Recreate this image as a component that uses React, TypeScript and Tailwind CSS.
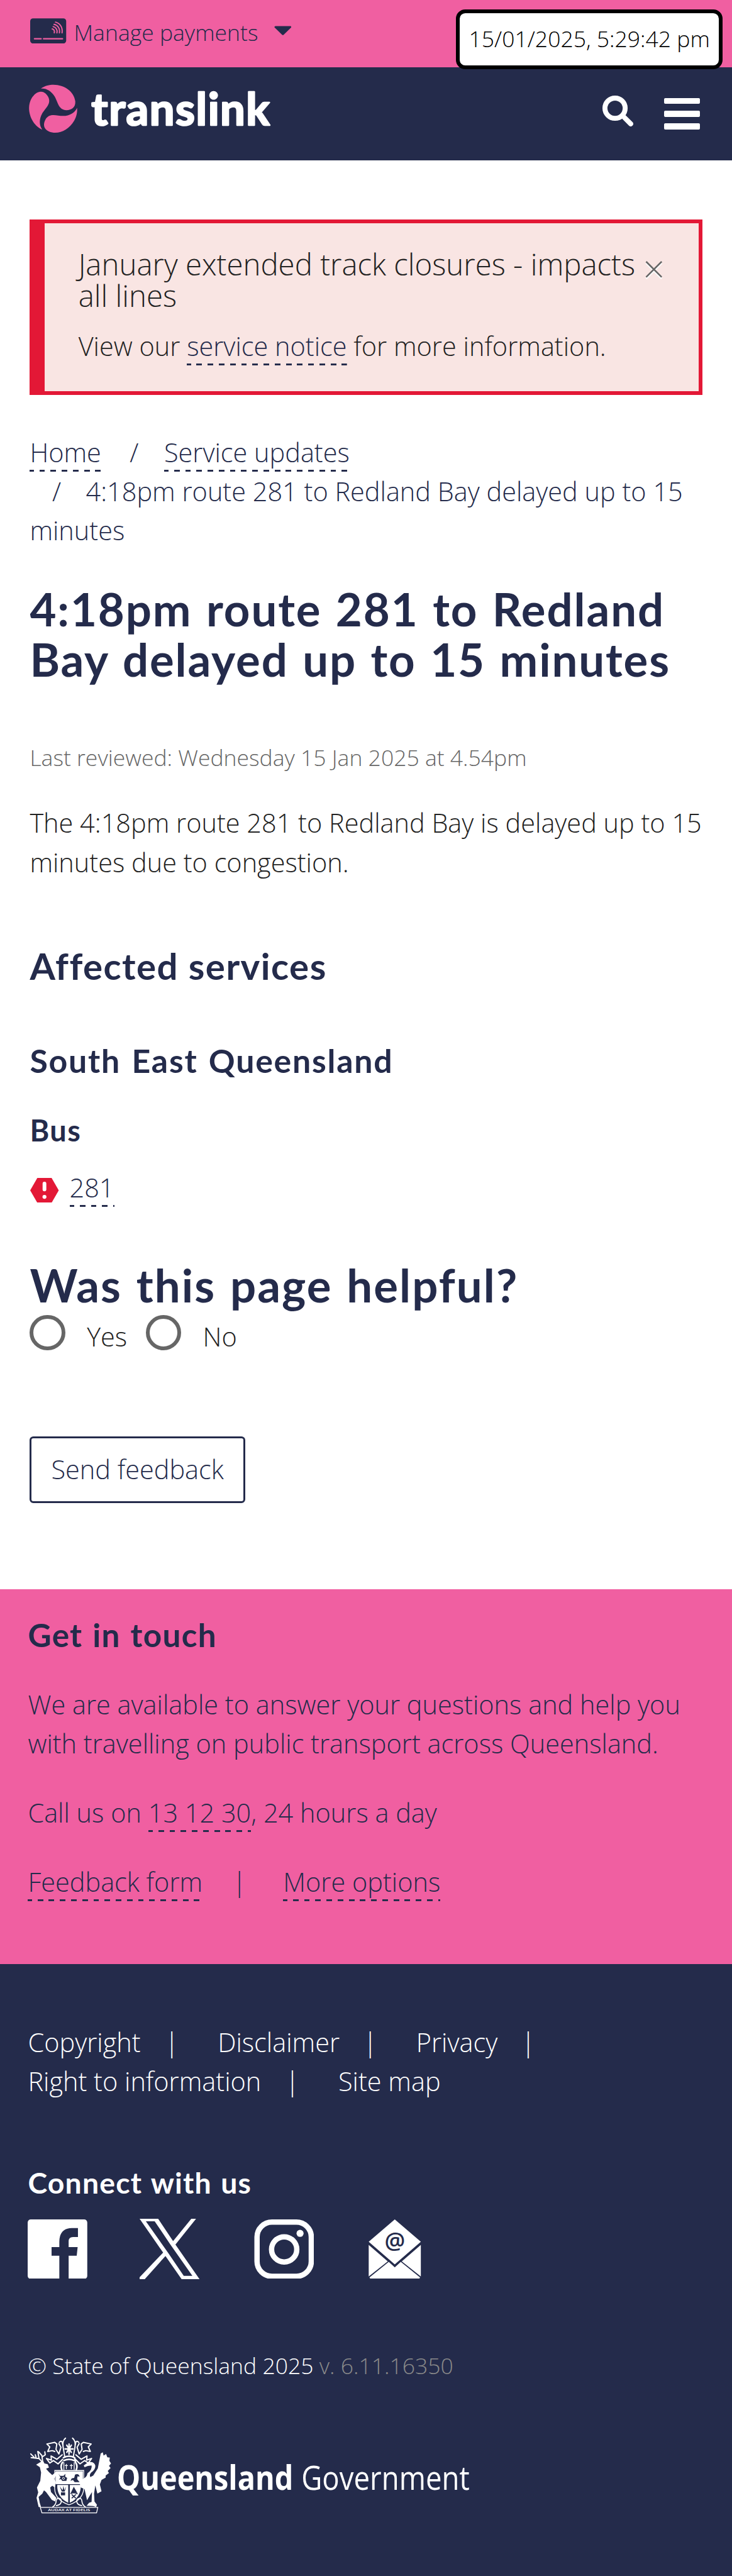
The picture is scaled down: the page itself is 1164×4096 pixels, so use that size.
import type { ReactNode } from "react";

function DashedLink({ children }: { children: ReactNode }) {
  return (
    <a
      href="#"
      className="bg-[repeating-linear-gradient(90deg,#242b4b_0_7px,transparent_7px_16px,#242b4b_16px_18px)] bg-[length:100%_3px] bg-bottom bg-no-repeat pb-[3px] text-[#242b4b]"
    >
      {children}
    </a>
  );
}

function CardIcon() {
  return (
    <svg viewBox="28 57 175 122" className="h-[41px] w-[58px] shrink-0">
      <rect x="28" y="57" width="175" height="122" rx="14" fill="#242b4b" />
      <g fill="none" stroke="#f05fa1" strokeWidth="6" strokeLinecap="round">
        <path d="M49 156H81M93 156H185" strokeWidth="7" />
        <path d="M151 75C172 80 187 100 183 127" />
        <path d="M144 86C161 89 174 106 170 127" />
        <path d="M140 97C152 99 162 112 158 127" />
        <path d="M135 108C143 110 148 117 145 127" />
      </g>
    </svg>
  );
}

function TranslinkLogo() {
  const blade =
    "M79 399C100 384 122 380 140 380C195 380 240 414 246 460C248 490 228 503 203 503C165 502 162 465 147 438C130 410 105 396 79 399Z";
  return (
    <svg viewBox="22 378 1170 240" className="h-[80px] w-[390px] overflow-visible">
      <g fill="#f05fa1">
        <path d={blade} />
        <path d={blade} transform="rotate(120 140 496)" />
        <path d={blade} transform="rotate(240 140 496)" />
      </g>
      <text
        x="324"
        y="576"
        textLength="862"
        lengthAdjust="spacing"
        fill="#fff"
        stroke="#fff"
        strokeWidth="8"
        strokeLinejoin="round"
        className="font-[Lato] text-[214px] font-bold"
      >
        translink
      </text>
    </svg>
  );
}

function CoatOfArms() {
  return (
    <svg viewBox="0 0 432 405" className="h-[135px] w-[144px] shrink-0 overflow-visible">
      <g fill="none" stroke="#fff" strokeWidth="6" strokeLinecap="round" strokeLinejoin="round">
        <path d="M192 24Q176 36 180 64L188 112M226 24Q242 36 238 64L230 112M162 44Q176 30 178 54M256 44Q242 30 240 54" />
        <path d="M209 52V102M190 76H228M198 58L220 92M220 58L198 92" strokeWidth="7" />
        <path d="M102 52L140 44L150 52L146 78L160 100L170 68L160 50M102 52L116 66L106 88L128 84L140 88M316 52L278 44L268 52L272 78L258 100L248 68L258 50M316 52L302 66L312 88L290 84L278 88" />
        <path d="M100 122L124 130L122 110L150 126L176 104M100 122L116 144L134 132L156 148L178 126M318 122L294 130L296 110L268 126L242 104M318 122L302 144L284 132L262 148L240 126" />
        <path d="M182 118Q209 104 236 118L240 140Q252 158 244 176M178 140Q166 158 174 176M184 132Q209 120 234 132" strokeWidth="8" />
        <path d="M184 142V176M234 142V176M196 158V172M220 158V172M190 156H202M214 156H226M196 150V158M220 150V158" strokeWidth="4" />
      </g>
      <g fill="none" stroke="#fff" strokeWidth="6" strokeLinecap="round">
        <path d="M80 140L64 122L26 118M42 118L24 100M64 122L58 88M82 142L78 108L62 90M80 114L94 104L92 90M50 118L46 104" />
      </g>
      <g fill="#fff">
        <path d="M50 152L70 140L84 134L90 146L106 150L112 166L98 172L112 188L128 202L146 186L150 200L136 220L146 236L140 262L128 254L118 262L122 284L148 312L142 330L126 322L98 284L88 276L80 292L62 308L68 338L74 356L62 356L52 312L60 286L54 262L70 230L74 190L68 164Z" />
        <path d="M280 156L302 140Q330 134 336 156Q338 176 316 190Q306 200 312 212L326 204L348 170L362 98L372 92L376 108L388 100L394 116L406 118L404 134L412 146L402 158L410 168L396 182L402 192L386 204L386 214L366 226L358 248L366 280L346 292L336 252L330 292L332 330L344 346L340 356L326 352L294 350L306 336L318 332L320 284L310 300L296 324L284 270L266 262L258 234L274 222Q296 214 298 194Q322 176 318 156L300 158L284 164Z" />
        <path d="M144 184H276V246H144ZM152 250H205V336Q150 310 152 250ZM213 250H266Q268 310 213 336Z" />
      </g>
      <g fill="none" stroke="#fff" strokeWidth="4">
        <path d="M140 180H280V250Q286 320 209 346Q132 320 140 250Z" />
        <path d="M146 350C178 346 178 316 158 314C136 318 160 338 128 358M272 350C240 346 240 316 260 314C282 318 258 338 290 358" strokeWidth="5" />
        <path d="M70 358H348L342 385H78Z" />
      </g>
      <g fill="#242b4b">
        <path d="M158 196L166 206H182L192 196L190 210L200 216L196 230H176L170 222L160 224L168 214Z" />
        <path d="M216 230L222 218L234 216L238 200Q256 192 260 210L250 208L248 222L260 236H236L228 226Z" />
        <path d="M164 256L174 282H188L196 256L186 276L182 254L178 276ZM170 286H190V300H170Z" />
        <path d="M232 258L250 290Q232 280 216 292Z" />
      </g>
      <g fill="none" stroke="#242b4b" strokeWidth="5">
        <circle cx="182" cy="218" r="5" stroke="#fff" strokeWidth="3" />
        <path d="M216 292Q236 282 250 294M222 296L242 314M242 296L222 314" />
      </g>
      <text
        x="107"
        y="378"
        textLength="204"
        lengthAdjust="spacingAndGlyphs"
        fill="#fff"
        className="font-['Open_Sans'] text-[15px] font-semibold"
      >
        AUDAX AT FIDELIS
      </text>
    </svg>
  );
}

function QueenslandGovernment() {
  return (
    <div className="flex items-start">
      <CoatOfArms />
      <svg viewBox="186 3920 580 135" className="h-[135px] w-[580px] overflow-visible" fill="#fff">
        <text
          x="188"
          y="4011"
          textLength="284"
          lengthAdjust="spacingAndGlyphs"
          className="font-['Open_Sans'] text-[54px] font-bold"
        >
          Queensland
        </text>
        <text
          x="485"
          y="4011"
          textLength="271"
          lengthAdjust="spacingAndGlyphs"
          className="font-['Open_Sans'] text-[54px] font-normal"
        >
          Government
        </text>
      </svg>
    </div>
  );
}

function SocialIcons() {
  return (
    <div className="mt-[28px] flex h-[98px] items-center">
      <svg viewBox="0 0 96 96" className="h-[96px] w-[96px]">
        <rect width="96" height="96" rx="5" fill="#fff" />
        <path
          d="M51 96V58.5H38.5V44.5H51V36C51 21 59 14 71 14H81V28.3H73Q66 28.5 66 35V44.5H80.5L79 58.5H66V96Z"
          fill="#242b4b"
        />
      </svg>
      <svg viewBox="0 0 1200 1227" className="ml-[84px] h-[98px] w-[97px]" preserveAspectRatio="none">
        <path
          fill="#fff"
          d="M714.163 519.284L1125 0H1030L667.137 450.887L370 0H0L468.492 681.821L0 1180V1226.37H95L515.491 750.218L842.672 1226.37H1200L714.163 519.284ZM569.165 687.828L125 50H300L611.412 515.685L1052 1150.3H880L569.165 687.828Z"
        />
      </svg>
      <svg viewBox="0 0 96 96" className="ml-[87px] h-[96px] w-[97px]">
        <g fill="none" stroke="#fff" strokeWidth="8.6">
          <rect x="4.3" y="4.3" width="87.4" height="87.4" rx="24" />
          <circle cx="48" cy="48.3" r="20.3" />
        </g>
        <circle cx="73.6" cy="22.5" r="5.7" fill="#fff" />
      </svg>
      <svg viewBox="0 0 84.6 96" className="ml-[88px] h-[96px] w-[84.6px]">
        <g fill="#fff">
          <path d="M42.3 0L84.3 36L42.3 72.5L0.3 36Z" />
          <path d="M0.3 41L31 67.5L0.3 92Z" />
          <path d="M84.3 41L53.6 67.5L84.3 92Z" />
          <path d="M32.6 68.5L42.3 77.3L52 68.5L83 93.5Q82 96 80 96H4.6Q2.6 96 1.6 93.5Z" />
        </g>
        <text
          x="42.5"
          y="47.5"
          textAnchor="middle"
          fill="#242b4b"
          className="font-['Open_Sans'] text-[37px] font-semibold"
        >
          @
        </text>
      </svg>
    </div>
  );
}

function Radio({ label }: { label: string }) {
  return (
    <label className="flex">
      <span className="h-[57px] w-[57px] rounded-full border-[6.1px] border-[#666]" />
      <span className="ml-[35px] pt-[3px]">{label}</span>
    </label>
  );
}

export default function App() {
  return (
    <div className="relative h-[4149px] w-[1179.1px] overflow-hidden bg-[#242b4b] font-['Open_Sans',sans-serif] text-[42px] leading-[63px] font-light text-[#222] [zoom:0.9872]">
      <div className="flex h-[108px] bg-[#f05fa1] pl-[49px] text-[#242b4b]">
        <div className="pt-[29px]">
          <CardIcon />
        </div>
        <div className="ml-[12px] pt-[25px] text-[36px] leading-[54px]">Manage payments</div>
        <svg viewBox="0 0 28 16" className="mt-[42px] ml-[26px] h-[16px] w-[28px]">
          <path
            d="M2 2H26L14 13.5Z"
            fill="#242b4b"
            stroke="#242b4b"
            strokeWidth="3"
            strokeLinejoin="round"
          />
        </svg>
      </div>
      <div className="absolute top-[15px] right-[15px] h-[96px] w-[429.5px] rounded-[15px] border-[6.1px] border-black bg-white text-center text-[36px] leading-[83px] whitespace-nowrap text-black">
        15/01/2025, 5:29:42 pm
      </div>

      <header className="flex h-[150px] items-start justify-between pr-[52px] pl-[47px]">
        <div className="pt-[28px]">
          <TranslinkLogo />
        </div>
        <div className="flex pt-[46px]">
          <svg viewBox="0 0 50 50" className="h-[50px] w-[50px]">
            <circle cx="20.3" cy="20.3" r="16.3" fill="none" stroke="#fff" strokeWidth="8" />
            <path d="M35.5 35.5L45.5 45.5" stroke="#fff" strokeWidth="8" strokeLinecap="round" />
          </svg>
          <div className="ml-[50px] flex w-[57px] flex-col gap-[11px] pt-[4px]">
            <span className="h-[9.5px] rounded-[2px] bg-white" />
            <span className="h-[9.5px] rounded-[2px] bg-white" />
            <span className="h-[9.5px] rounded-[2px] bg-white" />
          </div>
        </div>
      </header>

      <main className="h-[2302px] bg-white px-[48px] pt-[96px]">
        <div className="relative h-[282px] border-[6.1px] border-l-[24.4px] border-[#e31836] bg-[#f9e5e3] pt-[40px] pl-[54px]">
          <h2 className="w-[920px] text-[48px] leading-[51px]">
            January extended track closures - impacts all lines
          </h2>
          <p className="mt-[24px]">
            View our <DashedLink>service notice</DashedLink> for more information.
          </p>
          <svg viewBox="0 0 28 30" className="absolute top-[60px] right-[58px] h-[30px] w-[28px]">
            <path d="M1.5 3.5L26.5 28.5M26.5 3.5L1.5 28.5" stroke="#fff" strokeWidth="2.6" />
            <path d="M1.5 1L26.5 26M26.5 1L1.5 26" stroke="#666" strokeWidth="2.6" />
          </svg>
        </div>

        <nav className="mt-[61px] text-[#242b4b]">
          <div>
            <DashedLink>Home</DashedLink>
            <span className="mr-[41px] ml-[46px]">/</span>
            <DashedLink>Service updates</DashedLink>
          </div>
          <div>
            <span className="mr-[40px] ml-[36px]">/</span>4:18pm route 281 to Redland Bay delayed up to 15
            minutes
          </div>
        </nav>

        <h1 className="mt-[54.5px] font-[Lato] text-[73.5px] leading-[81px] font-bold tracking-[1.9px] whitespace-nowrap text-[#242b4b] [word-spacing:3px]">
          4:18pm route 281 to Redland
          <br />
          Bay delayed up to 15 minutes
        </h1>

        <p className="mt-[90.5px] text-[36px] leading-[54px] text-[#666]">
          Last reviewed: Wednesday 15 Jan 2025 at 4.54pm
        </p>
        <p className="mt-[47px] -mr-[10px]">
          The 4:18pm route 281 to Redland Bay is delayed up to 15
          <br />
          minutes due to congestion.
        </p>

        <h2 className="mt-[100.7px] font-[Lato] text-[59px] leading-[70px] font-bold tracking-[1.5px] text-[#242b4b]">
          Affected services
        </h2>
        <h3 className="mt-[85.8px] font-[Lato] text-[52.5px] leading-[64px] font-bold tracking-[1.8px] text-[#242b4b] [word-spacing:3px]">
          South East Queensland
        </h3>
        <h4 className="mt-[51px] font-[Lato] text-[47.5px] leading-[60px] font-bold tracking-[1.5px] text-[#242b4b]">
          Bus
        </h4>
        <div className="mt-[29.8px] flex">
          <svg viewBox="0 0 46 40" className="mt-[16px] mr-[17px] ml-[1px] h-[40px] w-[46px]">
            <path d="M11.5 0H34.5L46 20L34.5 40H11.5L0 20Z" fill="#e31836" />
            <path d="M23 9V18.5" stroke="#fff" strokeWidth="6" strokeLinecap="round" />
            <circle cx="23" cy="30.5" r="3.2" fill="#fff" />
          </svg>
          <span>
            <DashedLink>281</DashedLink>
          </span>
        </div>

        <h2 className="mt-[85.4px] font-[Lato] text-[73.5px] leading-[80px] font-bold tracking-[2.1px] text-[#242b4b] [word-spacing:3px]">
          Was this page helpful?
        </h2>
        <div className="mt-[8.6px] flex h-[66px] gap-[30px]">
          <Radio label="Yes" />
          <Radio label="No" />
        </div>
        <button className="mt-[129px] h-[108px] w-[347px] rounded-[6px] border-[3.1px] border-[#242b4b] text-center leading-[100px] font-light text-[#242b4b]">
          Send feedback
        </button>
      </main>

      <section className="h-[603px] bg-[#f05fa1] px-[45px] pt-[41.5px] text-[#242b4b]">
        <h2 className="font-[Lato] text-[52px] leading-[64px] font-bold tracking-[1.3px] [word-spacing:2px]">
          Get in touch
        </h2>
        <p className="mt-[48.5px]">
          We are available to answer your questions and help you
          <br />
          with travelling on public transport across Queensland.
        </p>
        <p className="mt-[48px]">
          Call us on <DashedLink>13 12 30</DashedLink>, 24 hours a day
        </p>
        <p className="mt-[48px] flex">
          <span>
            <DashedLink>Feedback form</DashedLink>
          </span>
          <span className="mr-[59px] ml-[48px]">|</span>
          <span>
            <DashedLink>More options</DashedLink>
          </span>
        </p>
      </section>

      <footer className="px-[45px] pt-[94.5px] text-white">
        <div className="flex">
          <span>Copyright</span>
          <span className="mr-[62.5px] ml-[39px]">|</span>
          <span>Disclaimer</span>
          <span className="mr-[62.5px] ml-[38px]">|</span>
          <span>Privacy</span>
          <span className="ml-[38px]">|</span>
        </div>
        <div className="flex">
          <span>Right to information</span>
          <span className="mr-[62.5px] ml-[39px]">|</span>
          <span>Site map</span>
        </div>
        <h3 className="mt-[102px] font-[Lato] text-[47px] leading-[60px] font-bold tracking-[1.2px] [word-spacing:2px]">
          Connect with us
        </h3>
        <SocialIcons />
        <p className="mt-[111.7px] text-[36px] leading-[54px]">
          © State of Queensland 2025 <span className="text-[#8a8a8a]">v. 6.11.16350</span>
        </p>
        <div className="mt-[82.3px] -ml-[3px]">
          <QueenslandGovernment />
        </div>
      </footer>
    </div>
  );
}
